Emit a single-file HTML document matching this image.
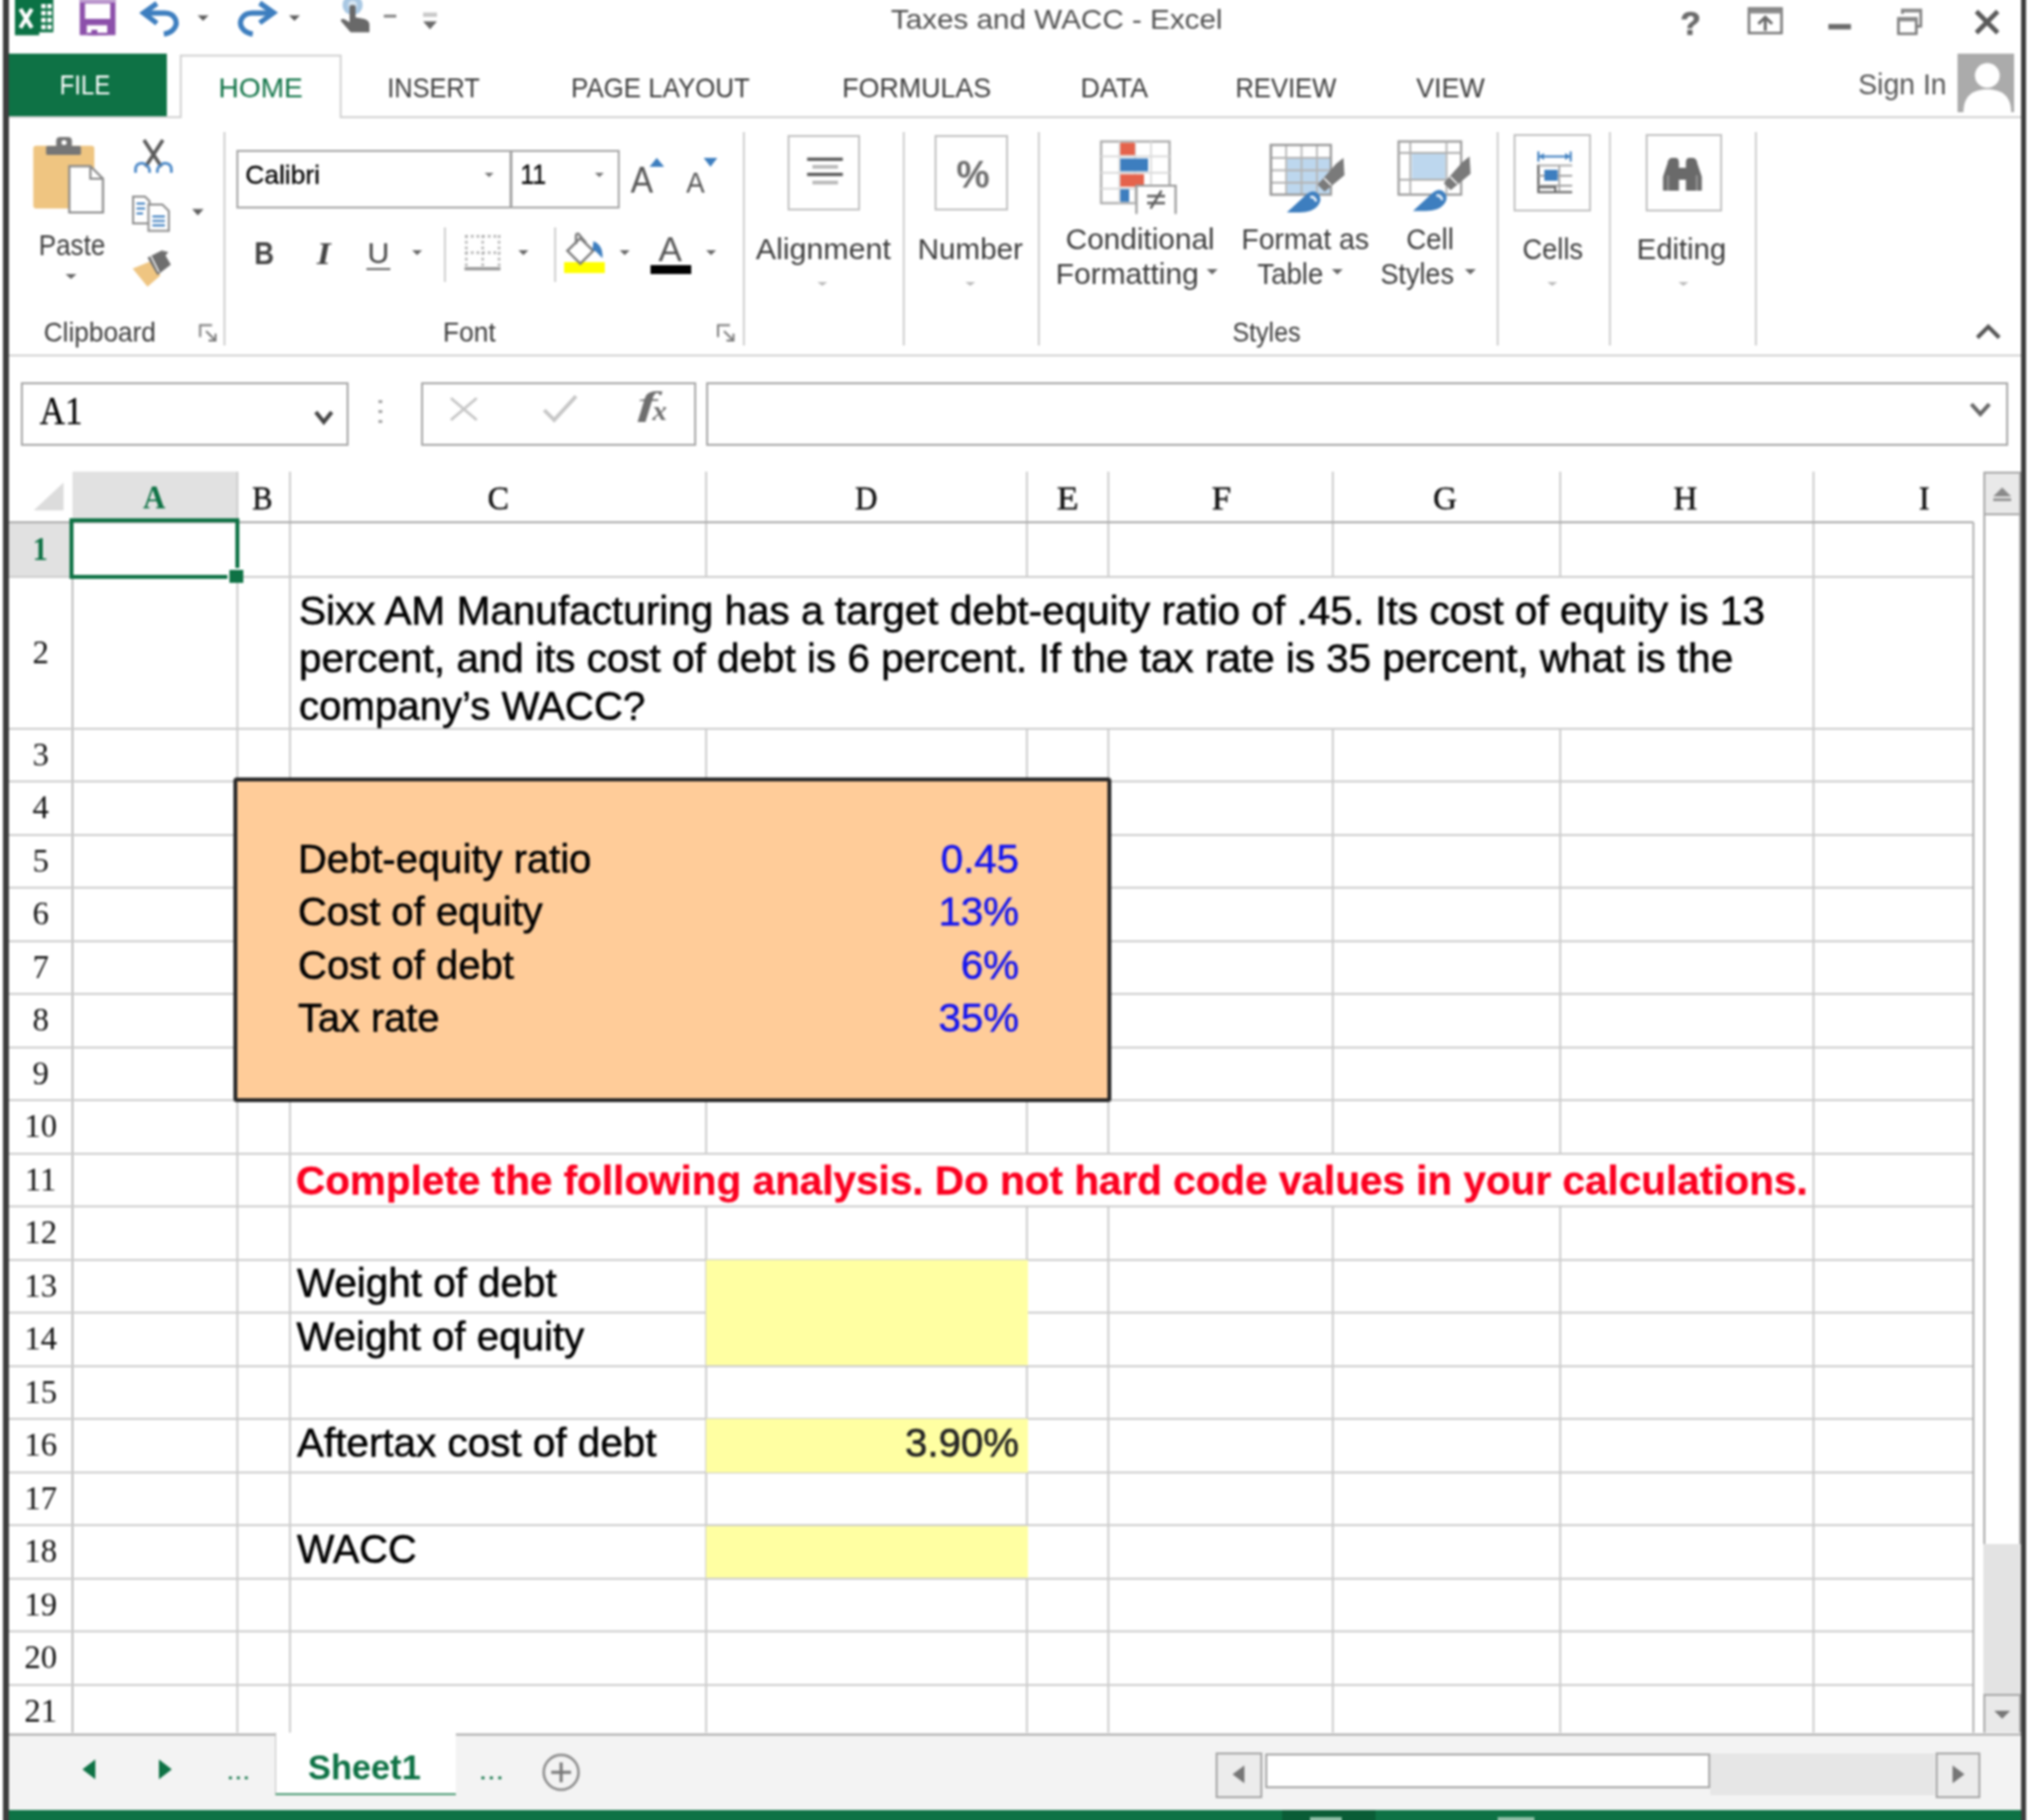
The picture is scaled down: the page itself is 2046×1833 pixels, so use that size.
<!DOCTYPE html>
<html><head><meta charset="utf-8"><title>Taxes and WACC - Excel</title>
<style>
html,body{margin:0;padding:0;}
body{width:2046px;height:1833px;position:relative;overflow:hidden;background:#fff;font-family:"Liberation Sans",sans-serif;}
.t{position:absolute;white-space:nowrap;}
.k{-webkit-text-stroke:0.55px currentColor;}
.s{font-family:"Liberation Sans",sans-serif;}
.f{font-family:"Liberation Serif",serif;}
.b{position:absolute;box-sizing:border-box;display:block;}
#w{position:absolute;left:-12px;top:-12px;width:2070px;height:1857px;background:#fff;filter:blur(0.9px);}
#c{position:absolute;left:12px;top:12px;width:2046px;height:1833px;}
svg{overflow:visible;}
</style></head><body><div id="w"><div id="c">
<div class="b" style="left:3.2px;top:-12.0px;width:6.0px;height:1857.0px;background:#3d3d3d;"></div>
<div class="b" style="left:2035.0px;top:-12.0px;width:5.3px;height:1857.0px;background:#3d3d3d;"></div>
<div class="t s" style="top:5.4px;font-size:28.5px;line-height:28.5px;color:#505050;left:896.5px;transform-origin:0 0;transform:scaleX(1.0474);">Taxes and WACC - Excel</div>
<div class="t s" style="top:5.7px;font-size:34px;line-height:34px;color:#6a6a6a;font-weight:700;left:1692.0px;transform-origin:0 0;transform:scaleX(0.9871);-webkit-text-stroke:0.7px #6a6a6a;">?</div>
<div class="b" style="left:9.0px;top:54.0px;width:158.5px;height:63.5px;background:#0e7245;"></div>
<div class="t s" style="top:72.3px;font-size:28px;line-height:28px;color:#fff;left:60.0px;transform-origin:0 0;transform:scaleX(0.8625);">FILE</div>
<div class="b" style="left:9.0px;top:116.5px;width:2026.0px;height:2.0px;background:#d2d2d2;"></div>
<div class="b" style="left:181.0px;top:55.0px;width:163.0px;height:64.0px;background:#fff;border:2px solid #d2d2d2;border-bottom:none;"></div>
<div class="t s" style="top:73.9px;font-size:28.5px;line-height:28.5px;color:#0e7245;left:220.0px;transform-origin:0 0;transform:scaleX(0.9941);">HOME</div>
<div class="t s" style="top:73.9px;font-size:28.5px;line-height:28.5px;color:#3c3c3c;left:390.0px;transform-origin:0 0;transform:scaleX(0.8943);">INSERT</div>
<div class="t s" style="top:73.9px;font-size:28.5px;line-height:28.5px;color:#3c3c3c;left:575.0px;transform-origin:0 0;transform:scaleX(0.9141);">PAGE LAYOUT</div>
<div class="t s" style="top:73.9px;font-size:28.5px;line-height:28.5px;color:#3c3c3c;left:848.0px;transform-origin:0 0;transform:scaleX(0.9473);">FORMULAS</div>
<div class="t s" style="top:73.9px;font-size:28.5px;line-height:28.5px;color:#3c3c3c;left:1088.0px;transform-origin:0 0;transform:scaleX(0.9473);">DATA</div>
<div class="t s" style="top:73.9px;font-size:28.5px;line-height:28.5px;color:#3c3c3c;left:1243.5px;transform-origin:0 0;transform:scaleX(0.9028);">REVIEW</div>
<div class="t s" style="top:73.9px;font-size:28.5px;line-height:28.5px;color:#3c3c3c;left:1426.0px;transform-origin:0 0;transform:scaleX(0.9473);">VIEW</div>
<div class="t s" style="top:71.0px;font-size:29px;line-height:29px;color:#555;left:1871.0px;transform-origin:0 0;transform:scaleX(0.9858);">Sign In</div>
<div class="b" style="left:1970.5px;top:54.0px;width:57.0px;height:59.0px;background:#ababab;"></div>
<svg class="b" style="left:1970.5px;top:54.0px" width="57" height="59" viewBox="0 0 57 59"><circle cx="30" cy="22" r="12.5" fill="#fff"/><path d="M6 59C6 42 16 36 30 36S54 42 54 59Z" fill="#fff"/></svg>
<div class="b" style="left:9.0px;top:357.0px;width:2026.0px;height:2.0px;background:#d2d2d2;"></div>
<div class="b" style="left:224.5px;top:132.5px;width:2.0px;height:215.5px;background:#cfcfcf;"></div>
<div class="b" style="left:747.5px;top:132.5px;width:2.0px;height:215.5px;background:#cfcfcf;"></div>
<div class="b" style="left:909.0px;top:132.5px;width:2.0px;height:215.5px;background:#cfcfcf;"></div>
<div class="b" style="left:1044.5px;top:132.5px;width:2.0px;height:215.5px;background:#cfcfcf;"></div>
<div class="b" style="left:1506.5px;top:132.5px;width:2.0px;height:215.5px;background:#cfcfcf;"></div>
<div class="b" style="left:1620.0px;top:132.5px;width:2.0px;height:215.5px;background:#cfcfcf;"></div>
<div class="b" style="left:1767.0px;top:132.5px;width:2.0px;height:215.5px;background:#cfcfcf;"></div>
<div class="t s" style="top:233.3px;font-size:29px;line-height:29px;color:#3c3c3c;left:39.0px;transform-origin:0 0;transform:scaleX(0.9035);">Paste</div>
<svg class="b" style="left:66.0px;top:275.5px" width="11" height="5" viewBox="0 0 11 5"><path d="M0 0H11L5.5 5Z" fill="#666"/></svg>
<div class="t s" style="top:320.7px;font-size:27.5px;line-height:27.5px;color:#3c3c3c;left:44.0px;transform-origin:0 0;transform:scaleX(0.9600);">Clipboard</div>
<div class="b" style="left:237.5px;top:151.0px;width:386.5px;height:58.5px;background:#fff;border:2.5px solid #a6a6a6;"></div>
<div class="b" style="left:513.2px;top:151.0px;width:2.5px;height:58.5px;background:#a6a6a6;"></div>
<div class="t s" style="top:162.6px;font-size:26.5px;line-height:26.5px;color:#000;left:247.0px;transform-origin:0 0;-webkit-text-stroke:0.3px #000;">Calibri</div>
<svg class="b" style="left:487.5px;top:173.8px" width="9" height="4.5" viewBox="0 0 9 4.5"><path d="M0 0H9L4.5 4.5Z" fill="#777"/></svg>
<div class="t s" style="top:162.6px;font-size:27px;line-height:27px;color:#000;left:523.5px;transform-origin:0 0;transform:scaleX(0.9276);-webkit-text-stroke:0.3px #000;">11</div>
<svg class="b" style="left:598.5px;top:173.8px" width="9" height="4.5" viewBox="0 0 9 4.5"><path d="M0 0H9L4.5 4.5Z" fill="#777"/></svg>
<div class="t s" style="top:238.9px;font-size:32px;line-height:32px;color:#444;font-weight:700;left:256.0px;transform-origin:0 0;transform:scaleX(0.8654);">B</div>
<div class="t f" style="top:239.2px;font-size:32px;line-height:32px;color:#444;font-weight:700;font-style:italic;left:319.0px;transform-origin:0 0;transform:scaleX(1.1242);">I</div>
<div class="t s" style="top:239.6px;font-size:30px;line-height:30px;color:#444;left:370.0px;transform-origin:0 0;transform:scaleX(1.0155);">U</div>
<div class="b" style="left:369.0px;top:270.0px;width:24.0px;height:2.0px;background:#666;"></div>
<svg class="b" style="left:415.0px;top:251.5px" width="10" height="5" viewBox="0 0 10 5"><path d="M0 0H10L5.0 5Z" fill="#666"/></svg>
<div class="b" style="left:447.2px;top:228.5px;width:2.0px;height:55.5px;background:#cfcfcf;"></div>
<svg class="b" style="left:522.0px;top:251.5px" width="10" height="5" viewBox="0 0 10 5"><path d="M0 0H10L5.0 5Z" fill="#666"/></svg>
<div class="b" style="left:558.1px;top:228.5px;width:2.0px;height:55.5px;background:#cfcfcf;"></div>
<div class="b" style="left:568.0px;top:264.0px;width:41.0px;height:11.0px;background:#ffff00;"></div>
<svg class="b" style="left:624.0px;top:251.5px" width="10" height="5" viewBox="0 0 10 5"><path d="M0 0H10L5.0 5Z" fill="#666"/></svg>
<div class="t s" style="top:233.4px;font-size:35px;line-height:35px;color:#555;left:663.0px;transform-origin:0 0;transform:scaleX(1.0109);">A</div>
<div class="t s" style="top:163.5px;font-size:36px;line-height:36px;color:#555;left:635.4px;transform-origin:0 0;transform:scaleX(0.9412);">A</div>
<div class="t s" style="top:169.5px;font-size:29px;line-height:29px;color:#555;left:691.4px;transform-origin:0 0;transform:scaleX(0.9616);">A</div>
<div class="b" style="left:654.5px;top:267.0px;width:41.5px;height:9.0px;background:#000;"></div>
<svg class="b" style="left:711.0px;top:251.5px" width="10" height="5" viewBox="0 0 10 5"><path d="M0 0H10L5.0 5Z" fill="#666"/></svg>
<div class="t s" style="top:320.7px;font-size:27.5px;line-height:27.5px;color:#3c3c3c;left:445.5px;transform-origin:0 0;transform:scaleX(0.9632);">Font</div>
<div class="b" style="left:793.0px;top:136.0px;width:73.0px;height:75.5px;background:#fff;border:2px solid #c2c2c2;"></div>
<div class="t s" style="top:236.8px;font-size:29px;line-height:29px;color:#3c3c3c;left:761.0px;transform-origin:0 0;transform:scaleX(1.0546);">Alignment</div>
<svg class="b" style="left:823.0px;top:283.5px" width="10" height="4" viewBox="0 0 10 4"><path d="M0 0H10L5.0 4Z" fill="#bbb"/></svg>
<div class="b" style="left:940.5px;top:136.0px;width:74.0px;height:75.5px;background:#fff;border:2px solid #c2c2c2;"></div>
<div class="t s" style="top:157.3px;font-size:38px;line-height:38px;color:#6c6c6c;font-weight:700;left:962.5px;transform-origin:0 0;transform:scaleX(0.9915);">%</div>
<div class="t s" style="top:236.8px;font-size:29px;line-height:29px;color:#3c3c3c;left:924.0px;transform-origin:0 0;transform:scaleX(1.0277);">Number</div>
<svg class="b" style="left:972.0px;top:283.5px" width="10" height="4" viewBox="0 0 10 4"><path d="M0 0H10L5.0 4Z" fill="#bbb"/></svg>
<div class="t s" style="top:226.8px;font-size:29px;line-height:29px;color:#3c3c3c;left:1073.0px;transform-origin:0 0;transform:scaleX(1.0338);">Conditional</div>
<div class="t s" style="top:262.3px;font-size:29px;line-height:29px;color:#3c3c3c;left:1063.0px;transform-origin:0 0;transform:scaleX(1.0390);">Formatting</div>
<svg class="b" style="left:1214.5px;top:271.2px" width="11" height="5.5" viewBox="0 0 11 5.5"><path d="M0 0H11L5.5 5.5Z" fill="#666"/></svg>
<div class="t s" style="top:226.8px;font-size:29px;line-height:29px;color:#3c3c3c;left:1249.5px;transform-origin:0 0;transform:scaleX(0.9845);">Format as</div>
<div class="t s" style="top:262.3px;font-size:29px;line-height:29px;color:#3c3c3c;left:1266.0px;transform-origin:0 0;transform:scaleX(0.9592);">Table</div>
<svg class="b" style="left:1341.0px;top:271.2px" width="11" height="5.5" viewBox="0 0 11 5.5"><path d="M0 0H11L5.5 5.5Z" fill="#666"/></svg>
<div class="t s" style="top:226.8px;font-size:29px;line-height:29px;color:#3c3c3c;left:1415.5px;transform-origin:0 0;transform:scaleX(0.9608);">Cell</div>
<div class="t s" style="top:262.3px;font-size:29px;line-height:29px;color:#3c3c3c;left:1389.5px;transform-origin:0 0;transform:scaleX(0.9370);">Styles</div>
<svg class="b" style="left:1474.5px;top:271.2px" width="11" height="5.5" viewBox="0 0 11 5.5"><path d="M0 0H11L5.5 5.5Z" fill="#666"/></svg>
<div class="t s" style="top:320.7px;font-size:27.5px;line-height:27.5px;color:#3c3c3c;left:1240.5px;transform-origin:0 0;transform:scaleX(0.9147);">Styles</div>
<div class="b" style="left:1524.0px;top:135.0px;width:78.0px;height:77.5px;background:#fff;border:2px solid #c2c2c2;"></div>
<div class="t s" style="top:236.8px;font-size:29px;line-height:29px;color:#3c3c3c;left:1532.5px;transform-origin:0 0;transform:scaleX(0.9464);">Cells</div>
<svg class="b" style="left:1558.0px;top:283.5px" width="10" height="4" viewBox="0 0 10 4"><path d="M0 0H10L5.0 4Z" fill="#bbb"/></svg>
<div class="b" style="left:1656.5px;top:135.0px;width:77.5px;height:77.5px;background:#fff;border:2px solid #c2c2c2;"></div>
<div class="t s" style="top:236.8px;font-size:29px;line-height:29px;color:#3c3c3c;left:1648.0px;transform-origin:0 0;transform:scaleX(1.0150);">Editing</div>
<svg class="b" style="left:1690.0px;top:283.5px" width="10" height="4" viewBox="0 0 10 4"><path d="M0 0H10L5.0 4Z" fill="#bbb"/></svg>
<svg class="b" style="left:1989.0px;top:325.0px" width="26" height="18" viewBox="0 0 26 18"><path d="M2 15L13 4L24 15" fill="none" stroke="#555" stroke-width="4"/></svg>
<svg class="b" style="left:0;top:0" width="2046" height="1833" viewBox="0 0 2046 1833"><rect x="15" y="-10" width="24.50" height="45.50" fill="#0b7245" /><rect x="39" y="-10" width="14.70" height="42.50" fill="#0b7245" /><rect x="41.5" y="4" width="4.50" height="4.50" fill="#fff" /><rect x="47.5" y="4" width="4.50" height="4.50" fill="#fff" /><rect x="41.5" y="11" width="4.50" height="4.50" fill="#fff" /><rect x="47.5" y="11" width="4.50" height="4.50" fill="#fff" /><rect x="41.5" y="18" width="4.50" height="4.50" fill="#fff" /><rect x="47.5" y="18" width="4.50" height="4.50" fill="#fff" /><rect x="41.5" y="25" width="4.50" height="4.50" fill="#fff" /><rect x="47.5" y="25" width="4.50" height="4.50" fill="#fff" /><path d="M20.5 9L32 28M32 9L20.5 28" fill="none" stroke="#fff" stroke-width="4.2" /><rect x="80.3" y="-10" width="36.00" height="45.40" fill="#8c50aa" /><rect x="80.3" y="-10" width="36.00" height="12.50" fill="#c3a3d3" /><rect x="85.6" y="3.5" width="25.40" height="15.50" fill="#fff" /><rect x="87.4" y="25.4" width="20.60" height="10.00" fill="#fff" /><rect x="92" y="30" width="6.00" height="5.40" fill="#8c50aa" /><rect x="87.4" y="33" width="20.60" height="2.40" fill="#8c50aa" /><path d="M158 3.5L144.5 13L158 23.5" fill="none" stroke="#3d7ebf" stroke-width="5.2" stroke-linejoin="miter"/><path d="M147 13.2H166C176 13.2 180 22 175.5 28.5C173 32 169.5 33.6 165 34.4" fill="none" stroke="#3d7ebf" stroke-width="5.2" stroke-linecap="butt"/><path d="M261.5 3L275.5 12.8L261.5 23" fill="none" stroke="#3d7ebf" stroke-width="5.2" /><path d="M273 13.2H254C244 13.2 239.5 22 244 28.5C246.5 32 250 33.6 254.5 34.4" fill="none" stroke="#3d7ebf" stroke-width="5.2" /><path d="M199.0 15.5H210.0L204.5 21Z" fill="#5a5a5a" /><path d="M291.0 15.5H302.0L296.5 21Z" fill="#5a5a5a" /><circle cx="355" cy="5" r="10.2" fill="#a9c8e3"/><circle cx="355" cy="5" r="4.5" fill="#d5e4f1"/><path d="M352 6.5Q352 5 355 5Q358 5 358 6.5V17.5L366.5 19Q372 20.5 372 25V32.5H353L343.5 21.5Q342.5 19.5 345 19Q347 18.8 352 22.5Z" fill="#696969" /><rect x="386.5" y="14.8" width="12.50" height="2.80" fill="#808080" /><rect x="426" y="12.6" width="14.00" height="4.40" fill="#c9c9c9" /><path d="M426 21.5H440L433 29.5Z" fill="#696969" /><path d="M1761 8.6H1793.8V33.3H1761Z" fill="none" stroke="#7a7a7a" stroke-width="2.6" /><rect x="1761" y="8.6" width="32.80" height="4.90" fill="#8a8a8a" /><path d="M1777.4 31V18M1770.5 24L1777.4 17.3L1784.3 24" fill="none" stroke="#6a6a6a" stroke-width="3" /><rect x="1841" y="24.2" width="22.70" height="5.40" fill="#6a6a6a" /><path d="M1915.5 14V10H1934V26.5H1930" fill="none" stroke="#7a7a7a" stroke-width="2.6" /><rect x="1915.5" y="9" width="18.50" height="3.50" fill="#8a8a8a" /><path d="M1911.5 18.5H1929.5V34H1911.5Z" fill="none" stroke="#7a7a7a" stroke-width="2.6" /><rect x="1911.5" y="17.5" width="18.00" height="4.00" fill="#8a8a8a" /><path d="M1990 11.5L2011.5 33M2011.5 11.5L1990 33" fill="none" stroke="#5a5a5a" stroke-width="4.6" /><rect x="33.5" y="146.7" width="61.50" height="63.30" fill="#efc581" rx="3" /><path d="M56.6 148.5V142Q56.6 138 60.5 138H68.5Q72.4 138 72.4 142V148.5Z" fill="#767676" /><circle cx="64.5" cy="143.5" r="2.6" fill="#fff"/><rect x="46.4" y="147" width="35.10" height="9.00" fill="#767676" rx="1.5" /><path d="M69.8 167.3H91L103.7 180V214H69.8Z" fill="#fff" stroke="#8a8a8a" stroke-width="2.2" /><path d="M91 167.3V180H103.7" fill="none" stroke="#8a8a8a" stroke-width="2.2" /><path d="M145 141L162.5 168M164 141L146.5 168" fill="none" stroke="#5a5a5a" stroke-width="3.6" /><path d="M146.5 165.5C142 163 136.5 165 136.5 170.5V174M146.5 166C149 167 151 170 150.5 174" fill="none" stroke="#4f8bc9" stroke-width="2.8" /><path d="M162.5 165.5C167 163 172.5 165 172.5 170.5V174M162.5 166C160 167 158 170 158.5 174" fill="none" stroke="#4f8bc9" stroke-width="2.8" /><path d="M134 198H146L150.5 202.5V225H134Z" fill="#fff" stroke="#8c8c8c" stroke-width="2" /><path d="M137.5 205H146M137.5 210H146M137.5 215H144" fill="none" stroke="#3d7ebf" stroke-width="1.8" /><path d="M149.5 206H163.5L170 212.5V232.5H149.5Z" fill="#fff" stroke="#8c8c8c" stroke-width="2" /><path d="M153.5 218H166M153.5 222.5H166M153.5 227H166" fill="none" stroke="#3d7ebf" stroke-width="1.8" /><path d="M193.5 210.5H205L199.2 217Z" fill="#5f5f5f" /><path d="M133.6 270.6L154.5 262L161.5 277.5L148.5 288.7Z" fill="#efc581" /><path d="M148.5 259.5L163.5 252L172 266.5L158.5 277Z" fill="#6e6e6e" /><path d="M164 252.5L169.5 254L166 258Z" fill="#6e6e6e" /><path d="M152 258L160 274" fill="none" stroke="#fff" stroke-width="1.6" /><path d="M201.5 339.5V327.5H213.5" fill="none" stroke="#7a7a7a" stroke-width="2" /><path d="M207.5 333.5L216.5 342.5M217.0 336.0V343.0H210.0" fill="none" stroke="#7a7a7a" stroke-width="2" /><path d="M723 339.5V327.5H735" fill="none" stroke="#7a7a7a" stroke-width="2" /><path d="M729 333.5L738 342.5M738.5 336.0V343.0H731.5" fill="none" stroke="#7a7a7a" stroke-width="2" /><path d="M654 168L661.3 159L668.7 168Z" fill="#3d7ebf" /><path d="M708.5 159H722.3L715.4 168Z" fill="#3d7ebf" /><path d="M468.5 238H503.5" fill="none" stroke="#a9a9a9" stroke-width="2.4" stroke-dasharray="2.5 3.2"/><path d="M468.5 254.5H503.5" fill="none" stroke="#a9a9a9" stroke-width="2.4" stroke-dasharray="2.5 3.2"/><path d="M469.5 237V268" fill="none" stroke="#a9a9a9" stroke-width="2.4" stroke-dasharray="2.5 3.2"/><path d="M486 237V268" fill="none" stroke="#a9a9a9" stroke-width="2.4" stroke-dasharray="2.5 3.2"/><path d="M502.5 237V268" fill="none" stroke="#a9a9a9" stroke-width="2.4" stroke-dasharray="2.5 3.2"/><rect x="467.7" y="269" width="36.20" height="3.30" fill="#9a9a9a" /><path d="M584.3 240L597.3 252.6L584.3 265.5L571.3 252.6Z" fill="#fff" stroke="#7c7c7c" stroke-width="2.4" /><path d="M580 246V237.5Q580 235 582.5 235.5L590 244.5" fill="none" stroke="#7c7c7c" stroke-width="2.4" /><path d="M597.5 243C603 245 607.5 250 606.5 260C602.5 256 600 252.5 596.5 251.5Z" fill="#3d7ebf" /><rect x="812.7" y="158.7" width="35.90" height="3.30" fill="#5a5a5a" /><rect x="812.7" y="174" width="35.90" height="3.30" fill="#5a5a5a" /><rect x="818" y="166.2" width="25.80" height="3.60" fill="#b9b9b9" /><rect x="818" y="182" width="25.80" height="3.70" fill="#b9b9b9" /><rect x="1108.7" y="142.5" width="68.90" height="62.10" fill="#fff" stroke="#a9a9a9" stroke-width="2.2" /><path d="M1127 142.5V204.6" fill="none" stroke="#dcdcdc" stroke-width="1.8" /><path d="M1143 142.5V204.6" fill="none" stroke="#dcdcdc" stroke-width="1.8" /><path d="M1159 142.5V204.6" fill="none" stroke="#dcdcdc" stroke-width="1.8" /><path d="M1108.7 157.5H1177.6" fill="none" stroke="#dcdcdc" stroke-width="1.8" /><path d="M1108.7 174H1177.6" fill="none" stroke="#dcdcdc" stroke-width="1.8" /><path d="M1108.7 190H1177.6" fill="none" stroke="#dcdcdc" stroke-width="1.8" /><rect x="1128" y="143.8" width="14.80" height="12.40" fill="#e5634c" /><rect x="1128" y="159.6" width="28.00" height="12.90" fill="#3d7ebf" /><rect x="1128" y="175.5" width="23.90" height="12.50" fill="#e5634c" /><rect x="1128" y="190.6" width="9.00" height="12.70" fill="#3d7ebf" /><rect x="1144.3" y="187" width="39.40" height="28.50" fill="#fff" /><path d="M1144.3 215.5V187H1183.7V215.5" fill="none" stroke="#9a9a9a" stroke-width="2.2" /><path d="M1155 197.5H1173M1155 204.5H1173M1169.5 192L1158.5 210" fill="none" stroke="#5f5f5f" stroke-width="2.4" /><rect x="1279.7" y="146" width="60.30" height="50.00" fill="#fff" stroke="#9a9a9a" stroke-width="2.2" /><rect x="1296" y="160" width="43.00" height="35.00" fill="#bdd7ee" /><path d="M1295 146V196" fill="none" stroke="#b5b5b5" stroke-width="1.8" /><path d="M1310.5 146V196" fill="none" stroke="#b5b5b5" stroke-width="1.8" /><path d="M1326 146V196" fill="none" stroke="#b5b5b5" stroke-width="1.8" /><path d="M1279.7 159H1340" fill="none" stroke="#b5b5b5" stroke-width="1.8" /><path d="M1279.7 171.5H1340" fill="none" stroke="#b5b5b5" stroke-width="1.8" /><path d="M1279.7 184H1340" fill="none" stroke="#b5b5b5" stroke-width="1.8" /><rect x="1279.7" y="146" width="60.30" height="50.00" fill="none" stroke="#9a9a9a" stroke-width="2.2" /><path d="M1345.2 165L1352.7 159L1353.7 176.5L1333.7 193L1326.7 186Z" fill="#7a7a7a" /><path d="M1333.2 179.5L1340.2 186.5" fill="none" stroke="#fff" stroke-width="1.6" /><path d="M1295.7 214L1315.7 195.5Q1321.7 190.5 1327.2 195Q1332.2 201 1326.7 207.5Q1321.7 213.5 1308.7 214Z" fill="#3d7ebf" /><path d="M1319.2 198.5Q1323.7 197.5 1325.2 203" fill="none" stroke="#e6f0fa" stroke-width="2.6" /><rect x="1408.3" y="142.5" width="62.90" height="53.50" fill="#fff" stroke="#9a9a9a" stroke-width="2.2" /><rect x="1421.5" y="155" width="34.00" height="25.00" fill="#bdd7ee" /><path d="M1420 142.5V196M1456.5 142.5V196M1408.3 154H1471.2M1408.3 181H1471.2" fill="none" stroke="#b0b0b0" stroke-width="1.8" /><path d="M1472.2 163.5L1479.7 157.5L1480.7 175.0L1460.7 191.5L1453.7 184.5Z" fill="#7a7a7a" /><path d="M1460.2 178.0L1467.2 185.0" fill="none" stroke="#fff" stroke-width="1.6" /><path d="M1422.7 212.5L1442.7 194.0Q1448.7 189.0 1454.2 193.5Q1459.2 199.5 1453.7 206.0Q1448.7 212.0 1435.7 212.5Z" fill="#3d7ebf" /><path d="M1446.2 197.0Q1450.7 196.0 1452.2 201.5" fill="none" stroke="#e6f0fa" stroke-width="2.6" /><path d="M1549.5 157.6H1581" fill="none" stroke="#3d7ebf" stroke-width="2" /><path d="M1549 152.5V162.7M1581.5 152.5V162.7" fill="none" stroke="#3d7ebf" stroke-width="2" /><path d="M1554.5 154L1550 157.6L1554.5 161.2Z M1576 154L1580.5 157.6L1576 161.2Z" fill="#3d7ebf" /><path d="M1549 165.7V193.5H1583" fill="none" stroke="#5f5f5f" stroke-width="2.2" /><path d="M1549 166.7H1583M1549 177H1583M1549 187H1583M1570 166V193" fill="none" stroke="#a5a5a5" stroke-width="1.8" /><rect x="1555" y="171" width="13.50" height="11.00" fill="#3d7ebf" /><path d="M1549 188.5H1566V194" fill="none" stroke="#5f5f5f" stroke-width="2" /><path d="M1674.5 192V178L1679.0 164.5Q1679.5 159 1684.0 159H1687.0Q1690.5 159 1690.5 164V192Z" fill="#6a6a6a" /><g transform="translate(3388,0) scale(-1,1)"><path d="M1674.5 192V178L1679.0 164.5Q1679.5 159 1684.0 159H1687.0Q1690.5 159 1690.5 164V192Z" fill="#6a6a6a" /></g><rect x="1688" y="169" width="12.00" height="12.00" fill="#6a6a6a" /><path d="M1679.5 176.5V192M1708.5 176.5V192" fill="none" stroke="#9b9b9b" stroke-width="1.8" /></svg>
<div class="b" style="left:21.0px;top:385.0px;width:329.5px;height:63.5px;background:#fff;border:2.5px solid #a6a6a6;"></div>
<div class="t f" style="top:394.0px;font-size:40px;line-height:40px;color:#000;left:40.0px;transform-origin:0 0;transform:scaleX(0.8796);-webkit-text-stroke:0.35px #000;">A1</div>
<svg class="b" style="left:316.0px;top:411.0px" width="20" height="20" viewBox="0 0 20 20"><path d="M2 4L10 14L18 4" fill="none" stroke="#444" stroke-width="4"/></svg>
<div class="b" style="left:381.3px;top:402.5px;width:3.3px;height:3.2px;background:#a8a8a8;"></div>
<div class="b" style="left:381.3px;top:412.5px;width:3.3px;height:3.2px;background:#a8a8a8;"></div>
<div class="b" style="left:381.3px;top:422.5px;width:3.3px;height:3.2px;background:#a8a8a8;"></div>
<div class="b" style="left:424.0px;top:385.0px;width:277.0px;height:63.5px;background:#fff;border:2.5px solid #a6a6a6;"></div>
<svg class="b" style="left:452.0px;top:399.0px" width="30" height="26" viewBox="0 0 30 26"><path d="M2 2L28 24M28 2L2 24" stroke="#c6c6c6" stroke-width="2.8" fill="none"/></svg>
<svg class="b" style="left:546.0px;top:397.0px" width="36" height="28" viewBox="0 0 36 28"><path d="M2 16L12 26L34 2" stroke="#c6c6c6" stroke-width="3.8" fill="none"/></svg>
<div class="t f" style="top:390.9px;font-size:33px;line-height:33px;color:#6e6e6e;font-weight:700;font-style:italic;left:642.0px;transform-origin:0 0;transform:scaleX(1.8199);">f</div>
<div class="t f" style="top:400.8px;font-size:27px;line-height:27px;color:#6e6e6e;font-weight:700;font-style:italic;left:657.0px;transform-origin:0 0;transform:scaleX(1.0741);">x</div>
<div class="b" style="left:711.0px;top:385.0px;width:1310.5px;height:63.5px;background:#fff;border:2.5px solid #a6a6a6;"></div>
<svg class="b" style="left:1983.0px;top:404.0px" width="22" height="18" viewBox="0 0 22 18"><path d="M2 3L11 13L20 3" fill="none" stroke="#666" stroke-width="4"/></svg>
<div class="b" style="left:9.0px;top:475.0px;width:1978.0px;height:51.0px;background:#fff;"></div>
<div class="b" style="left:72.5px;top:475.0px;width:166.5px;height:51.0px;background:#e1e1e1;"></div>
<div class="b" style="left:9.0px;top:526.0px;width:63.5px;height:55.0px;background:#e1e1e1;"></div>
<svg class="b" style="left:34.0px;top:486.0px" width="30" height="28" viewBox="0 0 30 28"><path d="M30 0V28H0Z" fill="#dcdcdc"/></svg>
<div class="b" style="left:238.0px;top:475.0px;width:2.0px;height:1271.0px;background:#cdcdcd;"></div>
<div class="b" style="left:291.0px;top:475.0px;width:2.0px;height:1271.0px;background:#cdcdcd;"></div>
<div class="b" style="left:710.0px;top:475.0px;width:2.0px;height:1271.0px;background:#cdcdcd;"></div>
<div class="b" style="left:1033.0px;top:475.0px;width:2.0px;height:1271.0px;background:#cdcdcd;"></div>
<div class="b" style="left:1115.0px;top:475.0px;width:2.0px;height:1271.0px;background:#cdcdcd;"></div>
<div class="b" style="left:1341.0px;top:475.0px;width:2.0px;height:1271.0px;background:#cdcdcd;"></div>
<div class="b" style="left:1570.0px;top:475.0px;width:2.0px;height:1271.0px;background:#cdcdcd;"></div>
<div class="b" style="left:1825.0px;top:475.0px;width:2.0px;height:1271.0px;background:#cdcdcd;"></div>
<div class="b" style="left:71.5px;top:526.0px;width:2.0px;height:1220.0px;background:#bebebe;"></div>
<div class="b" style="left:9.0px;top:580.0px;width:1978.0px;height:2.0px;background:#cdcdcd;"></div>
<div class="b" style="left:9.0px;top:732.7px;width:1978.0px;height:2.0px;background:#cdcdcd;"></div>
<div class="b" style="left:9.0px;top:786.2px;width:1978.0px;height:2.0px;background:#cdcdcd;"></div>
<div class="b" style="left:9.0px;top:839.7px;width:1978.0px;height:2.0px;background:#cdcdcd;"></div>
<div class="b" style="left:9.0px;top:893.2px;width:1978.0px;height:2.0px;background:#cdcdcd;"></div>
<div class="b" style="left:9.0px;top:946.7px;width:1978.0px;height:2.0px;background:#cdcdcd;"></div>
<div class="b" style="left:9.0px;top:1000.2px;width:1978.0px;height:2.0px;background:#cdcdcd;"></div>
<div class="b" style="left:9.0px;top:1053.7px;width:1978.0px;height:2.0px;background:#cdcdcd;"></div>
<div class="b" style="left:9.0px;top:1107.2px;width:1978.0px;height:2.0px;background:#cdcdcd;"></div>
<div class="b" style="left:9.0px;top:1160.7px;width:1978.0px;height:2.0px;background:#cdcdcd;"></div>
<div class="b" style="left:9.0px;top:1214.2px;width:1978.0px;height:2.0px;background:#cdcdcd;"></div>
<div class="b" style="left:9.0px;top:1267.7px;width:1978.0px;height:2.0px;background:#cdcdcd;"></div>
<div class="b" style="left:9.0px;top:1321.2px;width:1978.0px;height:2.0px;background:#cdcdcd;"></div>
<div class="b" style="left:9.0px;top:1374.7px;width:1978.0px;height:2.0px;background:#cdcdcd;"></div>
<div class="b" style="left:9.0px;top:1428.2px;width:1978.0px;height:2.0px;background:#cdcdcd;"></div>
<div class="b" style="left:9.0px;top:1481.7px;width:1978.0px;height:2.0px;background:#cdcdcd;"></div>
<div class="b" style="left:9.0px;top:1535.2px;width:1978.0px;height:2.0px;background:#cdcdcd;"></div>
<div class="b" style="left:9.0px;top:1588.7px;width:1978.0px;height:2.0px;background:#cdcdcd;"></div>
<div class="b" style="left:9.0px;top:1642.2px;width:1978.0px;height:2.0px;background:#cdcdcd;"></div>
<div class="b" style="left:9.0px;top:1695.7px;width:1978.0px;height:2.0px;background:#cdcdcd;"></div>
<div class="b" style="left:9.0px;top:525.0px;width:1978.0px;height:2.0px;background:#ababab;"></div>
<div class="b" style="left:1986.0px;top:526.0px;width:2.2px;height:1220.0px;background:#b2b2b2;"></div>
<div class="b" style="left:293.0px;top:582.0px;width:1532.0px;height:150.7px;background:#fff;"></div>
<div class="b" style="left:293.0px;top:1162.7px;width:1532.0px;height:51.5px;background:#fff;"></div>
<div class="t f" style="top:484.5px;font-size:33.5px;line-height:33.5px;color:#111;left:254.0px;transform-origin:0 0;transform:scaleX(0.9175);-webkit-text-stroke:0.45px #111;">B</div>
<div class="t f" style="top:484.5px;font-size:33.5px;line-height:33.5px;color:#111;left:491.0px;transform-origin:0 0;transform:scaleX(0.9622);-webkit-text-stroke:0.45px #111;">C</div>
<div class="t f" style="top:484.5px;font-size:33.5px;line-height:33.5px;color:#111;left:861.0px;transform-origin:0 0;transform:scaleX(0.9300);-webkit-text-stroke:0.45px #111;">D</div>
<div class="t f" style="top:484.5px;font-size:33.5px;line-height:33.5px;color:#111;left:1064.0px;transform-origin:0 0;transform:scaleX(1.0751);-webkit-text-stroke:0.45px #111;">E</div>
<div class="t f" style="top:484.5px;font-size:33.5px;line-height:33.5px;color:#111;left:1220.0px;transform-origin:0 0;transform:scaleX(1.0466);-webkit-text-stroke:0.45px #111;">F</div>
<div class="t f" style="top:484.5px;font-size:33.5px;line-height:33.5px;color:#111;left:1443.0px;transform-origin:0 0;transform:scaleX(0.9920);-webkit-text-stroke:0.45px #111;">G</div>
<div class="t f" style="top:484.5px;font-size:33.5px;line-height:33.5px;color:#111;left:1685.0px;transform-origin:0 0;transform:scaleX(0.9920);-webkit-text-stroke:0.45px #111;">H</div>
<div class="t f" style="top:484.5px;font-size:33.5px;line-height:33.5px;color:#111;left:1932.0px;transform-origin:0 0;transform:scaleX(0.9860);-webkit-text-stroke:0.45px #111;">I</div>
<div class="t f" style="top:484.3px;font-size:33.5px;line-height:33.5px;color:#0e7245;font-weight:700;left:143.5px;transform-origin:0 0;transform:scaleX(0.9300);">A</div>
<div class="t f" style="top:536.9px;font-size:33px;line-height:33px;color:#0e7245;font-weight:700;left:33.0px;transform-origin:0 0;transform:scaleX(0.9091);">1</div>
<div class="t f" style="top:640.7px;font-size:33px;line-height:33px;color:#111;left:32.8px;transform-origin:0 0;">2</div>
<div class="t f" style="top:743.8px;font-size:33px;line-height:33px;color:#111;left:32.8px;transform-origin:0 0;">3</div>
<div class="t f" style="top:797.3px;font-size:33px;line-height:33px;color:#111;left:32.8px;transform-origin:0 0;">4</div>
<div class="t f" style="top:850.8px;font-size:33px;line-height:33px;color:#111;left:32.8px;transform-origin:0 0;">5</div>
<div class="t f" style="top:904.3px;font-size:33px;line-height:33px;color:#111;left:32.8px;transform-origin:0 0;">6</div>
<div class="t f" style="top:957.8px;font-size:33px;line-height:33px;color:#111;left:32.8px;transform-origin:0 0;">7</div>
<div class="t f" style="top:1011.3px;font-size:33px;line-height:33px;color:#111;left:32.8px;transform-origin:0 0;">8</div>
<div class="t f" style="top:1064.8px;font-size:33px;line-height:33px;color:#111;left:32.8px;transform-origin:0 0;">9</div>
<div class="t f" style="top:1118.3px;font-size:33px;line-height:33px;color:#111;left:24.5px;transform-origin:0 0;">10</div>
<div class="t f" style="top:1171.8px;font-size:33px;line-height:33px;color:#111;left:25.1px;transform-origin:0 0;">11</div>
<div class="t f" style="top:1225.3px;font-size:33px;line-height:33px;color:#111;left:24.5px;transform-origin:0 0;">12</div>
<div class="t f" style="top:1278.8px;font-size:33px;line-height:33px;color:#111;left:24.5px;transform-origin:0 0;">13</div>
<div class="t f" style="top:1332.3px;font-size:33px;line-height:33px;color:#111;left:24.5px;transform-origin:0 0;">14</div>
<div class="t f" style="top:1385.8px;font-size:33px;line-height:33px;color:#111;left:24.5px;transform-origin:0 0;">15</div>
<div class="t f" style="top:1439.3px;font-size:33px;line-height:33px;color:#111;left:24.5px;transform-origin:0 0;">16</div>
<div class="t f" style="top:1492.8px;font-size:33px;line-height:33px;color:#111;left:24.5px;transform-origin:0 0;">17</div>
<div class="t f" style="top:1546.3px;font-size:33px;line-height:33px;color:#111;left:24.5px;transform-origin:0 0;">18</div>
<div class="t f" style="top:1599.8px;font-size:33px;line-height:33px;color:#111;left:24.5px;transform-origin:0 0;">19</div>
<div class="t f" style="top:1653.3px;font-size:33px;line-height:33px;color:#111;left:24.5px;transform-origin:0 0;">20</div>
<div class="t f" style="top:1706.8px;font-size:33px;line-height:33px;color:#111;left:24.5px;transform-origin:0 0;">21</div>
<div class="t s k" style="top:595.0px;font-size:40.5px;line-height:40.5px;color:#000;left:301.0px;transform-origin:0 0;transform:scaleX(1.0072);">Sixx AM Manufacturing has a target debt-equity ratio of .45. Its cost of equity is 13</div>
<div class="t s k" style="top:643.2px;font-size:40.5px;line-height:40.5px;color:#000;left:301.0px;transform-origin:0 0;transform:scaleX(1.0054);">percent, and its cost of debt is 6 percent. If the tax rate is 35 percent, what is the</div>
<div class="t s k" style="top:691.0px;font-size:40.5px;line-height:40.5px;color:#000;left:301.0px;transform-origin:0 0;">company’s WACC?</div>
<div class="b" style="left:234.5px;top:782.6px;width:884.7px;height:327.4px;background:#ffcc99;border:4.6px solid #2a2a2a;border-radius:3.5px;"></div>
<div class="t s k" style="top:844.7px;font-size:40.5px;line-height:40.5px;color:#000;left:299.5px;transform-origin:0 0;transform:scaleX(0.9945);">Debt-equity ratio</div>
<div class="t s k" style="top:898.2px;font-size:40.5px;line-height:40.5px;color:#000;left:299.5px;transform-origin:0 0;transform:scaleX(0.9954);">Cost of equity</div>
<div class="t s k" style="top:952.0px;font-size:40.5px;line-height:40.5px;color:#000;left:299.5px;transform-origin:0 0;transform:scaleX(0.9960);">Cost of debt</div>
<div class="t s k" style="top:1005.0px;font-size:40.5px;line-height:40.5px;color:#000;left:299.5px;transform-origin:0 0;transform:scaleX(0.9891);">Tax rate</div>
<div class="t s k" style="top:844.7px;font-size:40.5px;line-height:40.5px;color:#1414f0;right:1020.0px;transform-origin:100% 0;">0.45</div>
<div class="t s k" style="top:898.2px;font-size:40.5px;line-height:40.5px;color:#1414f0;right:1020.0px;transform-origin:100% 0;">13%</div>
<div class="t s k" style="top:952.0px;font-size:40.5px;line-height:40.5px;color:#1414f0;right:1020.0px;transform-origin:100% 0;">6%</div>
<div class="t s k" style="top:1005.0px;font-size:40.5px;line-height:40.5px;color:#1414f0;right:1020.0px;transform-origin:100% 0;">35%</div>
<div class="t s" style="top:1168.7px;font-size:40px;line-height:40px;color:#fb0020;font-weight:700;left:297.8px;transform-origin:0 0;transform:scaleX(1.0191);-webkit-text-stroke:0.35px #fb0020;">Complete the following analysis. Do not hard code values in your calculations.</div>
<div class="b" style="left:711.0px;top:1268.5px;width:324.0px;height:106.5px;background:#ffffa2;"></div>
<div class="b" style="left:711.0px;top:1429.0px;width:324.0px;height:54.0px;background:#ffffa2;"></div>
<div class="b" style="left:711.0px;top:1536.5px;width:324.0px;height:52.5px;background:#ffffa2;"></div>
<div class="t s k" style="top:1272.2px;font-size:40.5px;line-height:40.5px;color:#000;left:298.5px;transform-origin:0 0;transform:scaleX(1.0041);">Weight of debt</div>
<div class="t s k" style="top:1326.2px;font-size:40.5px;line-height:40.5px;color:#000;left:298.5px;transform-origin:0 0;">Weight of equity</div>
<div class="t s k" style="top:1433.2px;font-size:40.5px;line-height:40.5px;color:#000;left:298.5px;transform-origin:0 0;transform:scaleX(1.0050);">Aftertax cost of debt</div>
<div class="t s k" style="top:1540.2px;font-size:40.5px;line-height:40.5px;color:#000;left:298.5px;transform-origin:0 0;transform:scaleX(0.9858);">WACC</div>
<div class="t s k" style="top:1433.2px;font-size:40.5px;line-height:40.5px;color:#222;right:1020.0px;transform-origin:100% 0;">3.90%</div>
<div class="b" style="left:70.2px;top:522.2px;width:170.4px;height:60.8px;border:4.4px solid #0e7245;"></div>
<div class="b" style="left:229.0px;top:571.5px;width:15.5px;height:15.5px;background:#0e7245;border:2.2px solid #fff;border-right:none;border-bottom:none;"></div>
<div class="b" style="left:1988.0px;top:475.0px;width:47.0px;height:1271.0px;background:#fff;"></div>
<div class="b" style="left:1996.5px;top:475.0px;width:38.5px;height:1271.0px;background:#fff;border:2px solid #a8a8a8;"></div>
<div class="b" style="left:1996.5px;top:475.0px;width:38.5px;height:44.0px;background:#e9e9e9;border:2px solid #a8a8a8;"></div>
<svg class="b" style="left:2007.0px;top:491.0px" width="18" height="14" viewBox="0 0 18 14"><path d="M9 0L18 9H0Z" fill="#8a8a8a"/><rect x="0" y="11" width="18" height="2.5" fill="#8a8a8a"/></svg>
<div class="b" style="left:1996.5px;top:1555.0px;width:38.5px;height:152.0px;background:#e3e3e3;"></div>
<div class="b" style="left:1996.5px;top:1705.5px;width:38.5px;height:41.5px;background:#e9e9e9;border:2px solid #a8a8a8;"></div>
<svg class="b" style="left:2008.0px;top:1723.0px" width="16" height="8" viewBox="0 0 16 8"><path d="M0 0H16L8.0 8Z" fill="#777"/></svg>
<div class="b" style="left:9.0px;top:1745.0px;width:2026.0px;height:80.0px;background:#f3f3f3;"></div>
<div class="b" style="left:9.0px;top:1745.5px;width:2026.0px;height:2.3px;background:#b0b0b0;"></div>
<div class="b" style="left:277.3px;top:1745.0px;width:181.7px;height:63.0px;background:#fff;border-bottom:2px solid #4a9a72;border-left:1.5px solid #c0c0c0;"></div>
<div class="t s" style="top:1762.4px;font-size:35px;line-height:35px;color:#0e7245;font-weight:700;left:310.0px;transform-origin:0 0;transform:scaleX(0.9906);">Sheet1</div>
<svg class="b" style="left:83.0px;top:1772.0px" width="14" height="20" viewBox="0 0 14 20"><path d="M13 0V20L0 10Z" fill="#0e7245"/></svg>
<svg class="b" style="left:160.0px;top:1772.0px" width="14" height="20" viewBox="0 0 14 20"><path d="M0 0V20L13 10Z" fill="#0e7245"/></svg>
<div class="t s" style="top:1770.0px;font-size:26px;line-height:26px;color:#0e7245;left:228.0px;transform-origin:0 0;transform:scaleX(1.1075);">...</div>
<div class="t s" style="top:1770.0px;font-size:26px;line-height:26px;color:#0e7245;left:482.0px;transform-origin:0 0;transform:scaleX(1.1767);">...</div>
<svg class="b" style="left:545.0px;top:1765.0px" width="40" height="40" viewBox="0 0 40 40"><circle cx="20" cy="20" r="17.5" fill="none" stroke="#8a8a8a" stroke-width="2.5"/><path d="M10 20H30M20 10V30" stroke="#777" stroke-width="3"/></svg>
<div class="b" style="left:1224.0px;top:1764.5px;width:47.0px;height:46.5px;background:#ececec;border:2.5px solid #a6a6a6;"></div>
<svg class="b" style="left:1241.0px;top:1778.0px" width="12" height="18" viewBox="0 0 12 18"><path d="M12 0V18L0 9Z" fill="#777"/></svg>
<div class="b" style="left:1273.5px;top:1765.5px;width:448.5px;height:35.5px;background:#fff;border:2.5px solid #a6a6a6;"></div>
<div class="b" style="left:1722.0px;top:1765.5px;width:226.0px;height:42.5px;background:#e6e6e6;"></div>
<div class="b" style="left:1948.5px;top:1764.5px;width:45.5px;height:46.5px;background:#ececec;border:2.5px solid #a6a6a6;"></div>
<svg class="b" style="left:1966.0px;top:1778.0px" width="12" height="18" viewBox="0 0 12 18"><path d="M0 0V18L12 9Z" fill="#777"/></svg>
<div class="b" style="left:9.0px;top:1823.3px;width:2026.0px;height:21.7px;background:#0e7245;"></div>
<div class="b" style="left:1290.8px;top:1823.3px;width:93.8px;height:21.7px;background:#0a5c36;"></div>
<div class="b" style="left:1318.5px;top:1829.6px;width:32.0px;height:15.4px;background:#8fbfa6;"></div>
<div class="b" style="left:1508.0px;top:1829.8px;width:36.5px;height:15.2px;background:#8fbfa6;"></div>
</div></div></body></html>
